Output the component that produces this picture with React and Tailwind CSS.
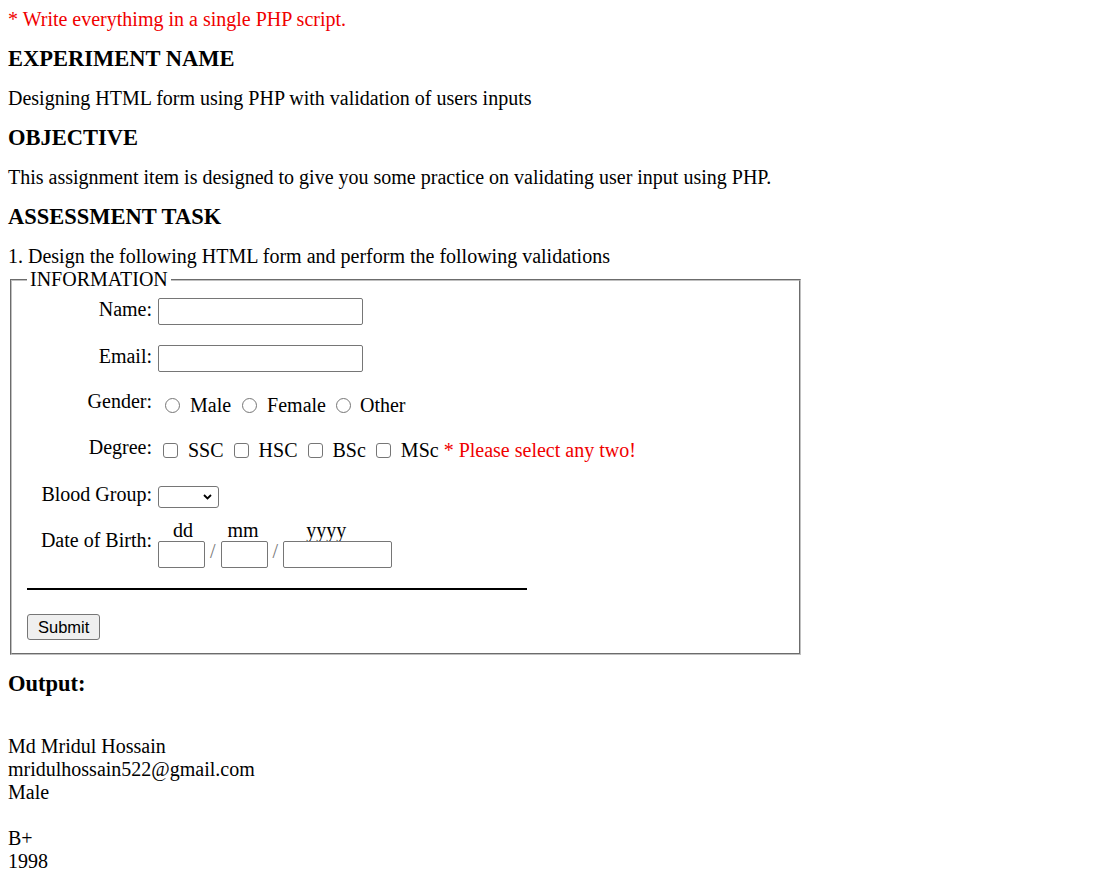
export default function App() {
  const labelCls = "w-[125px] shrink-0 text-right leading-[23px]";
  const textInput =
    "h-[27px] rounded-[2px] border border-[#767676] bg-white outline-none";
  const radioCls =
    "mt-[4px] h-[15px] w-[15px] shrink-0 appearance-none rounded-full border border-[#767676] bg-white";
  const checkCls =
    "mt-[4px] h-[15px] w-[15px] shrink-0 appearance-none rounded-[3px] border border-[#767676] bg-white";

  return (
    <div className="min-h-screen bg-white p-2 font-['Liberation_Serif',serif] text-[20px] leading-[23px] text-black">
      <div className="text-[#f00000]">* Write everythimg in a single PHP script.</div>

      <h3 className="mt-[15px] text-[22.5px] font-bold leading-[26px]">EXPERIMENT NAME</h3>
      <p className="mt-[15px]">Designing HTML form using PHP with validation of users inputs</p>

      <h3 className="mt-[15px] text-[22.5px] font-bold leading-[26px]">OBJECTIVE</h3>
      <p className="mt-[15px]">
        This assignment item is designed to give you some practice on validating user input using PHP.
      </p>

      <h3 className="mt-[15px] text-[22.5px] font-bold leading-[26px]">ASSESSMENT TASK</h3>
      <p className="mt-[15px]">1. Design the following HTML form and perform the following validations</p>

      <form onSubmit={(e) => e.preventDefault()}>
        <fieldset className="ml-[2px] w-[791px] border-2 border-[#c0c0c0] [border-style:groove] px-[15px] pt-[7px] pb-[13px]">
          <legend className="px-[3px] leading-[23px]">INFORMATION</legend>

          {/* Name */}
          <div className="flex items-start">
            <label className={labelCls}>Name:</label>
            <input type="text" className={"ml-[6px] w-[205px] " + textInput} />
          </div>

          {/* Email */}
          <div className="mt-[20px] flex items-start">
            <label className={labelCls}>Email:</label>
            <input type="text" className={"ml-[6px] w-[205px] " + textInput} />
          </div>

          {/* Gender */}
          <div className="mt-[18px] flex items-start">
            <span className={labelCls}>Gender:</span>
            <div className="ml-[6px] mt-[4px] flex items-start leading-[23px]">
              <input type="radio" name="gender" className={"ml-[7px] mr-[10px] " + radioCls} />
              <span>Male</span>
              <input type="radio" name="gender" className={"ml-[11px] mr-[10px] " + radioCls} />
              <span>Female</span>
              <input type="radio" name="gender" className={"ml-[10px] mr-[9px] " + radioCls} />
              <span>Other</span>
            </div>
          </div>

          {/* Degree */}
          <div className="mt-[19px] flex items-start">
            <span className={labelCls}>Degree:</span>
            <div className="ml-[6px] mt-[3px] flex items-start leading-[23px]">
              <input type="checkbox" className={"ml-[5px] mr-[10px] " + checkCls} />
              <span>SSC</span>
              <input type="checkbox" className={"ml-[10px] mr-[10px] " + checkCls} />
              <span>HSC</span>
              <input type="checkbox" className={"ml-[10px] mr-[10px] " + checkCls} />
              <span>BSc</span>
              <input type="checkbox" className={"ml-[10px] mr-[10px] " + checkCls} />
              <span>MSc</span>
              <span className="ml-[5px] text-[#f00000]">* Please select any two!</span>
            </div>
          </div>

          {/* Blood Group */}
          <div className="mt-[21px] flex items-start">
            <span className={labelCls}>Blood Group:</span>
            <div className="ml-[6px] mt-[3px] flex h-[22px] w-[61px] items-center justify-end rounded-[3px] border border-[#767676] bg-white pr-[6px]">
              <svg width="9" height="6" viewBox="0 0 9 6" fill="none">
                <path d="M1 1l3.5 3.5L8 1" stroke="#000" strokeWidth="1.8" />
              </svg>
            </div>
          </div>

          {/* Date of Birth */}
          <div className="mt-[11px] flex items-start">
            <span className={"mt-[10px] " + labelCls}>Date of Birth:</span>
            <div className="ml-[6px] flex items-start">
              <div className="flex w-[47px] flex-col">
                <span className="pl-[15px] leading-[22px]">dd</span>
                <input type="text" className={"w-[47px] " + textInput} />
              </div>
              <span className="mt-[21px] px-[5px] leading-[23px] text-[#777]">/</span>
              <div className="flex w-[47px] flex-col">
                <span className="pl-[7px] leading-[22px]">mm</span>
                <input type="text" className={"w-[47px] " + textInput} />
              </div>
              <span className="mt-[21px] px-[5px] leading-[23px] text-[#777]">/</span>
              <div className="flex w-[109px] flex-col">
                <span className="pl-[23px] leading-[22px]">yyyy</span>
                <input type="text" className={"w-[109px] " + textInput} />
              </div>
            </div>
          </div>

          <hr className="mt-[20px] h-[2px] w-[500px] border-0 bg-black" />

          <div className="mt-[24px] flex">
            <button
              type="submit"
              className="h-[26px] rounded-[3px] border border-[#767676] bg-[#efefef] px-[10px] font-['Liberation_Sans',Arial,sans-serif] text-[16.5px] leading-[20px] text-black"
            >
              Submit
            </button>
          </div>
        </fieldset>
      </form>

      <h3 className="mt-[16px] text-[22.5px] font-bold leading-[26px]">Output:</h3>
      <div className="mt-[38px]">
        <div>Md Mridul Hossain</div>
        <div>mridulhossain522@gmail.com</div>
        <div>Male</div>
        <div className="h-[23px]"></div>
        <div>B+</div>
        <div>1998</div>
      </div>
    </div>
  );
}
